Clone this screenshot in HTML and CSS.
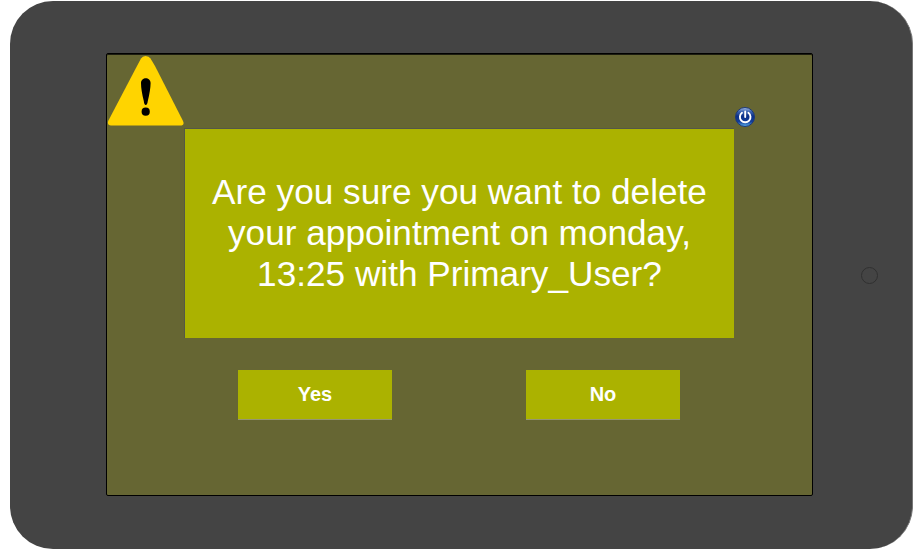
FILE: index.html
```html
<!DOCTYPE html>
<html lang="en">
<head>
<meta charset="utf-8">
<title>Delete appointment</title>
<link rel="stylesheet" href="styles.css">
</head>
<body>
<div class="tablet">
  <main class="screen">
    <header class="topbar">
      <svg class="warning" viewBox="0 0 77 72" aria-hidden="true">
        <path fill="#ffd400" d="M34 3.500Q35.500 1 38.500 1Q42 1 43.500 3.500L48 11L76 66Q78 70.500 73 70.500H4Q0 70.500 1.200 66L30 11Z"/>
        <path d="M34 28C34 21.500 43.600 21.500 43.600 28Q43.500 35 40.800 46Q40.300 50 38.700 50Q37.200 50 36.800 46Q34 35 34 28Z"/>
        <circle cx="38.700" cy="56.700" r="4.100"/>
      </svg>
      <svg class="power" viewBox="0 0 20 20" aria-hidden="true">
        <defs>
          <linearGradient id="orb" x1="0" y1="0" x2="0" y2="1">
            <stop offset="0" stop-color="#a9bfe8"/>
            <stop offset=".2" stop-color="#4068b5"/>
            <stop offset=".45" stop-color="#0c3088"/>
            <stop offset=".75" stop-color="#123d9a"/>
            <stop offset="1" stop-color="#5fb6ef"/>
          </linearGradient>
        </defs>
        <circle cx="10" cy="10" r="9.500" fill="url(#orb)" stroke="#1c3878" stroke-width="1"/>
        <path d="M7 5.800A5.300 5.300 0 1 0 13.400 5.800M10.200 4.500V10" fill="none" stroke="#fff" stroke-width="1.900" stroke-linecap="round"/>
      </svg>
    </header>
    <p class="message">Are you sure you want to delete<br>your appointment on monday,<br>13:25 with Primary_User?</p>
    <div class="actions">
      <button class="action" type="button">Yes</button>
      <button class="action" type="button">No</button>
    </div>
  </main>
  <div class="side"><span class="home"></span></div>
</div>
</body>
</html>
```
FILE: styles.css
```css
* {
  box-sizing: border-box;
}

body {
  margin: 0;
  padding: 1px 0 0 10px;
  height: 550px;
  overflow: hidden;
  background: #fff;
  font-family: "Liberation Sans", Arial, sans-serif;
}

.tablet {
  display: flex;
  width: 903px;
  height: 548px;
  padding: 52px 0 52px 96px;
  border-right: 1px solid #777;
  border-radius: 43px;
  background: #444;
}

.screen {
  width: 707px;
  height: 443px;
  border: 1px solid #000;
  border-radius: 2px;
  box-shadow: inset 0 1px #1c1c10;
  background: #663;
}

.topbar {
  display: flex;
  align-items: flex-end;
  justify-content: space-between;
  height: 74px;
  padding-right: 57px;
}

.warning {
  width: 77px;
  height: 72px;
  margin-bottom: 1px;
}

.power {
  width: 20px;
  height: 20px;
  margin-bottom: 1px;
}

.message {
  display: flex;
  align-items: center;
  justify-content: center;
  width: 550px;
  height: 210px;
  margin: 0 0 0 77px;
  padding-bottom: 2px;
  border: 1px solid #555846;
  border-width: 1px 0 0 1px;
  background: #abb200;
  color: #fff;
  font-size: 35.2px;
  line-height: 41px;
  text-align: center;
}

.actions {
  display: flex;
  gap: 134px;
  margin: 32px 0 0 131px;
}

.action {
  width: 154px;
  height: 50px;
  padding: 0;
  border: 0;
  border-bottom: 1px solid #969672;
  background: #abb200;
  color: #fff;
  font: bold 20px "Liberation Sans", Arial, sans-serif;
}

.side {
  flex: 1;
  display: flex;
  align-items: center;
  justify-content: center;
  padding: 1px 0 0 13px;
}

.home {
  width: 17px;
  height: 17px;
  border: 1px solid #303030;
  border-radius: 50%;
}
```
